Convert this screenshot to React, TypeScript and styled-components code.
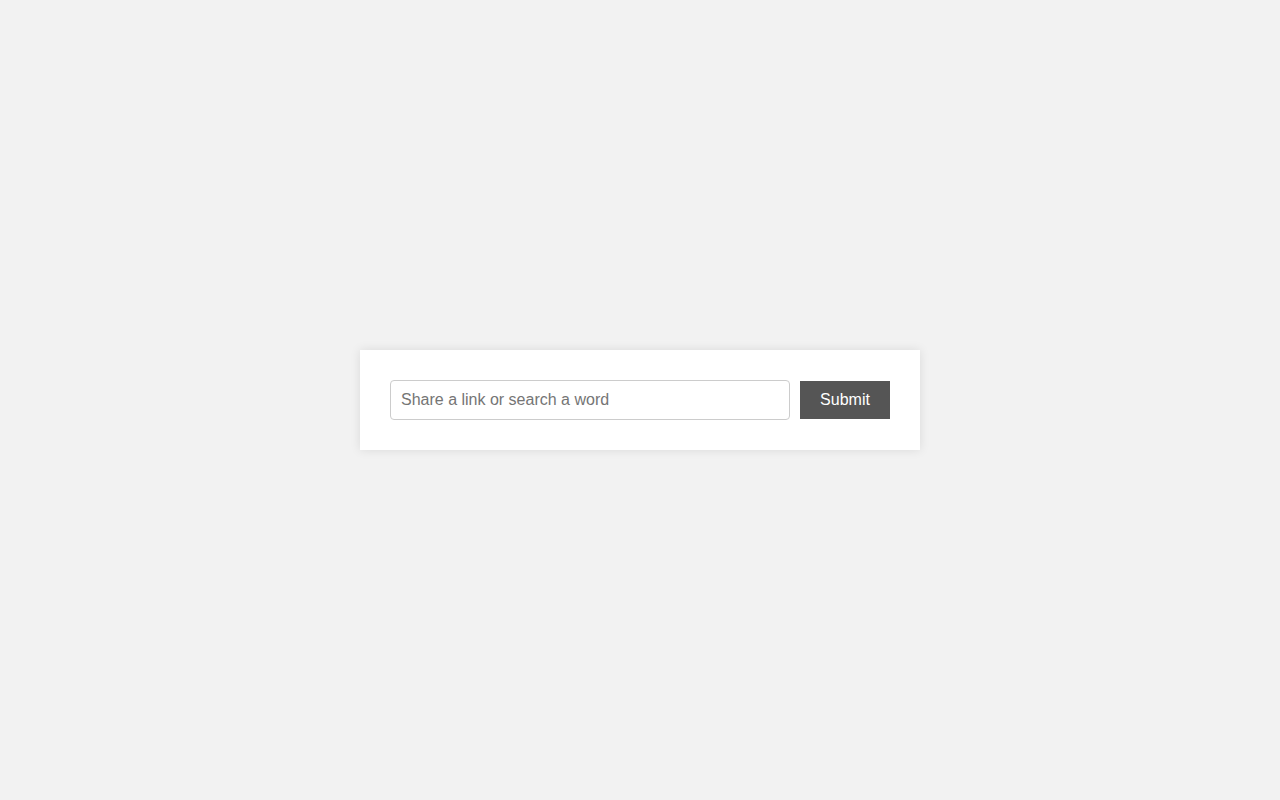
import React from "react";
import styled, { createGlobalStyle } from "styled-components";

const Global = createGlobalStyle`
  html, body { margin: 0; padding: 0; background: #f2f2f2; }
  body { font-family: "Liberation Sans", Arial, sans-serif; }
  * { box-sizing: border-box; }
`;

const Page = styled.div`
  min-height: 100vh;
  display: flex;
  align-items: center;
  justify-content: center;
`;

const Card = styled.form`
  width: 560px;
  height: 100px;
  padding: 30px;
  background: #fff;
  box-shadow: 0 0 10px rgba(0, 0, 0, 0.1);
  display: flex;
  align-items: center;
  gap: 10px;
`;

const Input = styled.input`
  width: 400px;
  height: 40px;
  padding: 0 10px;
  border: 1px solid #ccc;
  border-radius: 4px;
  font-family: "Liberation Sans", Arial, sans-serif;
  font-size: 16px;
  color: #333;
  outline: none;
  &::placeholder { color: #757575; }
`;

const Button = styled.button`
  width: 90px;
  height: 38px;
  border: none;
  background: #555;
  color: #fff;
  font-family: "Liberation Sans", Arial, sans-serif;
  font-size: 16px;
  cursor: pointer;
`;

export default function App() {
  return (
    <>
      <Global />
      <Page>
        <Card onSubmit={(e) => e.preventDefault()}>
          <Input type="text" placeholder="Share a link or search a word" />
          <Button type="submit">Submit</Button>
        </Card>
      </Page>
    </>
  );
}
